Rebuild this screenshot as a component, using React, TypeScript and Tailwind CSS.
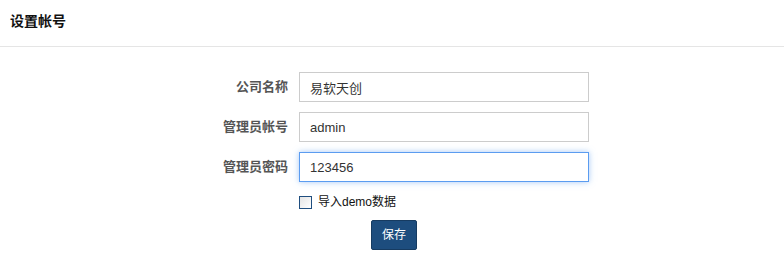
import { useState } from "react";

const FONT = { fontFamily: '"Liberation Sans", "Noto Sans CJK SC", sans-serif' };

interface FieldProps {
  label: string;
  value: string;
  focused?: boolean;
}

function Field({ label, value, focused }: FieldProps) {
  return (
    <div className="flex items-center h-[30px]">
      <label className="w-[299px] pr-[11px] text-right text-[13px] font-bold text-[#555]">
        {label}
      </label>
      <input
        defaultValue={value}
        className={
          focused
            ? "w-[290px] h-[30px] px-[10px] text-[13px] text-[#333] bg-white border border-[#5b9cf0] outline-none shadow-[0_0_6px_rgba(91,156,240,0.55)]"
            : "w-[290px] h-[30px] px-[10px] text-[13px] text-[#333] bg-white border border-[#cccccc] outline-none"
        }
        style={FONT}
      />
    </div>
  );
}

export default function App() {
  const [demo, setDemo] = useState(false);

  return (
    <div className="w-[784px] h-[266px] bg-white overflow-hidden" style={FONT}>
      {/* Page title */}
      <div className="h-[47px] border-b border-[#e5e5e5] px-[10px] pt-[13px]">
        <h2 className="text-[14px] leading-[16px] font-bold text-[#111]">设置帐号</h2>
      </div>

      {/* Form */}
      <div className="mt-[25px] flex flex-col gap-[10px]">
        <Field label="公司名称" value="易软天创" />
        <Field label="管理员帐号" value="admin" />
        <Field label="管理员密码" value="123456" focused />
      </div>

      <label className="mt-[13px] ml-[299px] flex items-center gap-[6px] h-[14px] cursor-pointer">
        <span
          onClick={() => setDemo(!demo)}
          className="w-[13px] h-[13px] border border-[#1f4e7f] bg-gradient-to-br from-[#e4e4e4] to-white"
        />
        <span className="text-[12px] text-[#111]">导入demo数据</span>
      </label>

      <button className="mt-[11px] ml-[371px] block w-[46px] h-[30px] bg-[#1d4d7e] border border-[#163b61] rounded-[2px] text-white text-[12px]">
        保存
      </button>
    </div>
  );
}
